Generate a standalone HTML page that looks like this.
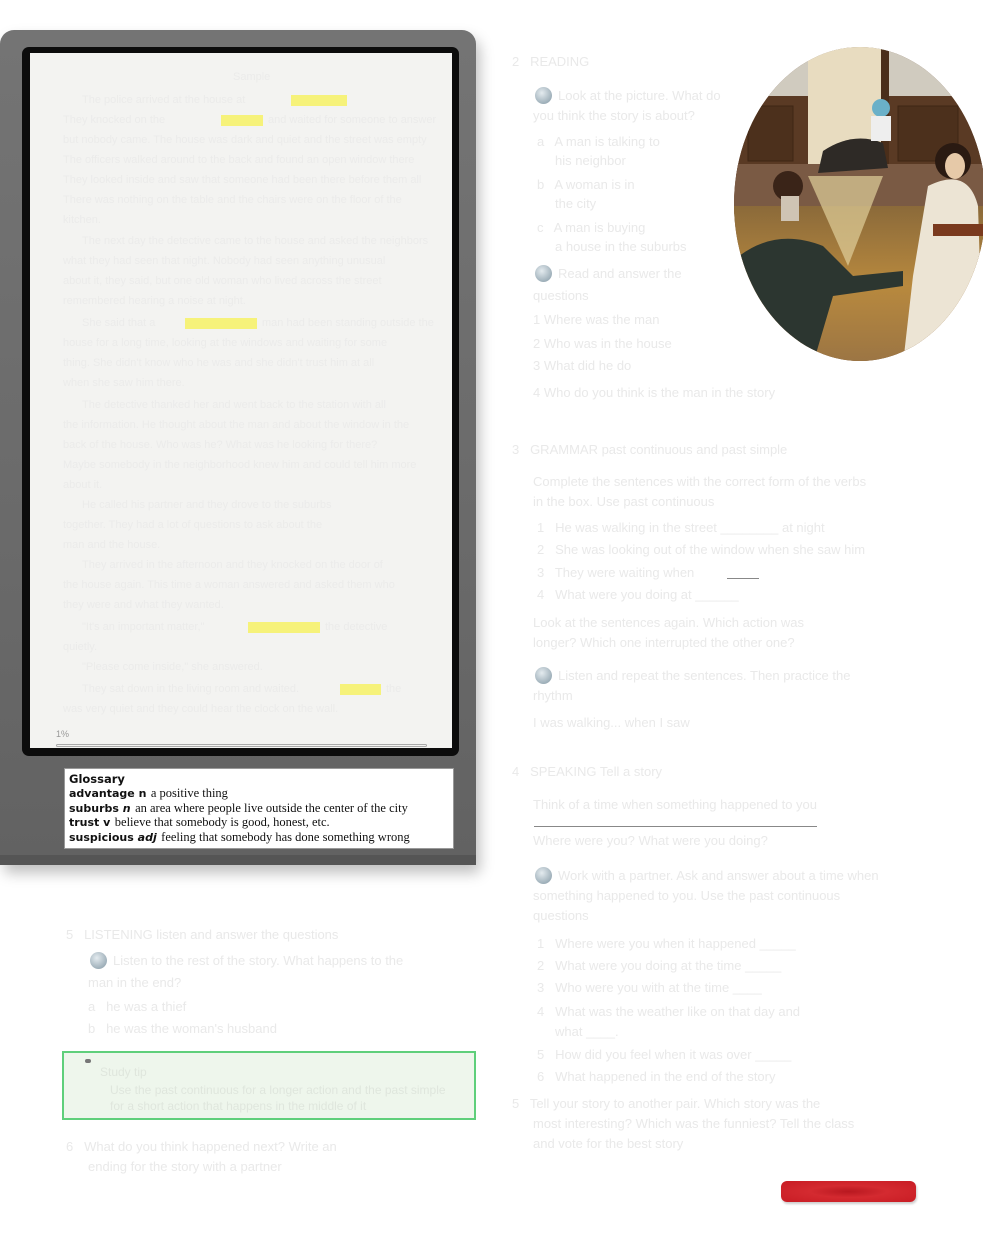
<!DOCTYPE html>
<html><head><meta charset="utf-8"><style>
*{margin:0;padding:0;box-sizing:border-box}
body{width:983px;height:1238px;background:#fff;position:relative;overflow:hidden;font-family:"Liberation Sans",sans-serif}
.t{position:absolute;color:#e9e9e9;font-size:13px;white-space:nowrap;line-height:1}
.s{position:absolute;color:#ebebea;font-size:11px;white-space:nowrap;line-height:1}
.h{position:absolute;background:#f6f27a;height:11px}
.dot{position:absolute;width:17px;height:17px;border-radius:50%;background:radial-gradient(circle at 40% 35%,#e4ebef,#9fb0ba 70%,#8c9ba5)}
.ln{position:absolute;height:1px;background:#888}
.g div{height:14.4px;line-height:14.4px;overflow:visible}
.g b{font-family:"DejaVu Sans";font-size:11px;line-height:14.4px}
.g span{font-family:"Liberation Serif";font-size:12.5px;line-height:14.4px}
</style></head><body>
<div style="position:absolute;left:0;top:30px;width:476px;height:835px;border-radius:14px 14px 4px 4px;background:linear-gradient(#747474,#6a6a6a 60%,#626262);box-shadow:4px 8px 14px rgba(0,0,0,.25)"></div>
<div style="position:absolute;left:0;top:855px;width:476px;height:10px;background:#555"></div>
<div style="position:absolute;left:22px;top:47px;width:437px;height:709px;border-radius:7px;background:#0c0c0c"></div>
<div style="position:absolute;left:30px;top:53px;width:422px;height:695px;background:#f3f3f1"></div>
<div class="h" style="left:291px;top:95px;width:56px"></div>
<div class="h" style="left:221px;top:115px;width:42px"></div>
<div class="h" style="left:185px;top:318px;width:72px"></div>
<div class="h" style="left:248px;top:622px;width:72px"></div>
<div class="h" style="left:340px;top:684px;width:41px"></div>
<div class="s" style="left:233px;top:72px">Sample</div>
<div class="s" style="left:82px;top:95px">The police arrived at the house at</div>
<div class="s" style="left:63px;top:115px">They knocked on the</div><div class="s" style="left:268px;top:115px">and waited for someone to answer</div>
<div class="s" style="left:63px;top:135px">but nobody came. The house was dark and quiet and the street was empty</div>
<div class="s" style="left:63px;top:155px">The officers walked around to the back and found an open window there</div>
<div class="s" style="left:63px;top:175px">They looked inside and saw that someone had been there before them all</div>
<div class="s" style="left:63px;top:195px">There was nothing on the table and the chairs were on the floor of the</div>
<div class="s" style="left:63px;top:215px">kitchen.</div>
<div class="s" style="left:82px;top:236px">The next day the detective came to the house and asked the neighbors</div>
<div class="s" style="left:63px;top:256px">what they had seen that night. Nobody had seen anything unusual</div>
<div class="s" style="left:63px;top:276px">about it, they said, but one old woman who lived across the street</div>
<div class="s" style="left:63px;top:296px">remembered hearing a noise at night.</div>
<div class="s" style="left:82px;top:318px">She said that a</div><div class="s" style="left:262px;top:318px">man had been standing outside the</div>
<div class="s" style="left:63px;top:338px">house for a long time, looking at the windows and waiting for some</div>
<div class="s" style="left:63px;top:358px">thing. She didn't know who he was and she didn't trust him at all</div>
<div class="s" style="left:63px;top:378px">when she saw him there.</div>
<div class="s" style="left:82px;top:400px">The detective thanked her and went back to the station with all</div>
<div class="s" style="left:63px;top:420px">the information. He thought about the man and about the window in the</div>
<div class="s" style="left:63px;top:440px">back of the house. Who was he? What was he looking for there?</div>
<div class="s" style="left:63px;top:460px">Maybe somebody in the neighborhood knew him and could tell him more</div>
<div class="s" style="left:63px;top:480px">about it.</div>
<div class="s" style="left:82px;top:500px">He called his partner and they drove to the suburbs</div>
<div class="s" style="left:63px;top:520px">together. They had a lot of questions to ask about the</div>
<div class="s" style="left:63px;top:540px">man and the house.</div>
<div class="s" style="left:82px;top:560px">They arrived in the afternoon and they knocked on the door of</div>
<div class="s" style="left:63px;top:580px">the house again. This time a woman answered and asked them who</div>
<div class="s" style="left:63px;top:600px">they were and what they wanted.</div>
<div class="s" style="left:82px;top:622px">"It's an important matter,"</div><div class="s" style="left:325px;top:622px">the detective</div>
<div class="s" style="left:63px;top:642px">quietly.</div>
<div class="s" style="left:82px;top:662px">"Please come inside," she answered.</div>
<div class="s" style="left:82px;top:684px">They sat down in the living room and waited.</div><div class="s" style="left:386px;top:684px">the</div>
<div class="s" style="left:63px;top:704px">was very quiet and they could hear the clock on the wall.</div>
<div style="position:absolute;left:56px;top:729px;font-size:9px;color:#999">1%</div>
<div style="position:absolute;left:56px;top:744px;width:371px;height:3px;border:1px solid #aaa;border-radius:2px"></div>
<div class="g" style="position:absolute;left:64px;top:768px;width:390px;height:81px;background:#fff;border:1px solid #999;padding:3px 4px;color:#111;white-space:nowrap">
<div><b style="font-size:11.5px">Glossary</b></div>
<div><b style="font-weight:600">advantage n</b> <span>a positive thing</span></div>
<div><b>suburbs <i>n</i></b> <span>an area where people live outside the center of the city</span></div>
<div><b>trust v</b> <span>believe that somebody is good, honest, etc.</span></div>
<div><b>suspicious <i>adj</i></b> <span>feeling that somebody has done something wrong</span></div>
</div>
<svg style="position:absolute;left:733px;top:46px" width="250" height="318" viewBox="0 0 250 318">
<defs><clipPath id="c"><ellipse cx="127" cy="158" rx="126" ry="157"/></clipPath>
<linearGradient id="cp" x1="0" y1="0" x2="0" y2="1"><stop offset="0" stop-color="#8b6a3a"/><stop offset=".5" stop-color="#b8893e"/><stop offset="1" stop-color="#9a7444"/></linearGradient></defs>
<g clip-path="url(#c)">
<rect width="250" height="318" fill="#6b4a32"/>
<rect width="250" height="50" fill="#d0cbbf"/>
<rect x="0" y="50" width="250" height="80" fill="#5a3a24"/>
<rect x="15" y="60" width="45" height="55" fill="#4c301c" stroke="#3e2614"/>
<rect x="165" y="60" width="60" height="55" fill="#4c301c" stroke="#3e2614"/>
<rect x="75" y="0" width="75" height="140" fill="#e8dcc0"/>
<rect x="148" y="0" width="8" height="140" fill="#4a2e1a"/>
<rect x="0" y="118" width="250" height="50" fill="#7a5a44"/>
<rect x="0" y="160" width="250" height="160" fill="url(#cp)"/>
<polygon points="75,130 150,130 115,220" fill="#e0cf9a" opacity=".7"/>
<path d="M90 105 q30 -20 60 -8 l5 25 -70 5z" fill="#2e2a26"/>
<circle cx="148" cy="62" r="9" fill="#6ab0c8"/>
<rect x="138" y="70" width="20" height="25" fill="#eee"/>
<path d="M0 215 Q40 180 90 200 L120 230 170 225 170 240 100 250 80 318 0 318z" fill="#2c3630"/>
<circle cx="55" cy="140" r="15" fill="#3a2418"/>
<rect x="48" y="150" width="18" height="25" fill="#cfc4b4"/>
<path d="M195 140 Q235 120 245 160 L250 318 170 318 180 230z" fill="#ece4d4"/>
<circle cx="220" cy="115" r="18" fill="#2a1a12"/>
<ellipse cx="222" cy="120" rx="10" ry="13" fill="#e6c9a8"/>
<rect x="200" y="178" width="55" height="12" fill="#7a3a1e"/>
</g></svg>
<div class="t" style="left:512px;top:55px">2 &nbsp; READING</div>
<div class="dot" style="left:535px;top:87px"></div>
<div class="t" style="left:558px;top:89px">Look at the picture. What do</div>
<div class="t" style="left:533px;top:109px">you think the story is about?</div>
<div class="t" style="left:537px;top:135px">a &nbsp; A man is talking to</div>
<div class="t" style="left:555px;top:154px">his neighbor</div>
<div class="t" style="left:537px;top:178px">b &nbsp; A woman is in</div>
<div class="t" style="left:555px;top:197px">the city</div>
<div class="t" style="left:537px;top:221px">c &nbsp; A man is buying</div>
<div class="t" style="left:555px;top:240px">a house in the suburbs</div>
<div class="dot" style="left:535px;top:265px"></div>
<div class="t" style="left:558px;top:267px">Read and answer the</div>
<div class="t" style="left:533px;top:289px">questions</div>
<div class="t" style="left:533px;top:313px">1 Where was the man</div>
<div class="t" style="left:533px;top:337px">2 Who was in the house</div>
<div class="t" style="left:533px;top:359px">3 What did he do</div>
<div class="t" style="left:533px;top:386px">4 Who do you think is the man in the story</div>
<div class="t" style="left:512px;top:443px">3 &nbsp; GRAMMAR past continuous and past simple</div>
<div class="t" style="left:533px;top:475px">Complete the sentences with the correct form of the verbs</div>
<div class="t" style="left:533px;top:495px">in the box. Use past continuous</div>
<div class="t" style="left:537px;top:521px">1 &nbsp; He was walking in the street ________ at night</div>
<div class="t" style="left:537px;top:543px">2 &nbsp; She was looking out of the window when she saw him</div>
<div class="t" style="left:537px;top:566px">3 &nbsp; They were waiting when</div>
<div class="t" style="left:537px;top:588px">4 &nbsp; What were you doing at ______</div>
<div class="ln" style="left:727px;top:578px;width:32px"></div>
<div class="t" style="left:533px;top:616px">Look at the sentences again. Which action was</div>
<div class="t" style="left:533px;top:636px">longer? Which one interrupted the other one?</div>
<div class="dot" style="left:535px;top:667px"></div>
<div class="t" style="left:558px;top:669px">Listen and repeat the sentences. Then practice the</div>
<div class="t" style="left:533px;top:689px">rhythm</div>
<div class="t" style="left:533px;top:716px">I was walking... when I saw</div>
<div class="t" style="left:512px;top:765px">4 &nbsp; SPEAKING Tell a story</div>
<div class="t" style="left:533px;top:798px">Think of a time when something happened to you</div>
<div class="ln" style="left:534px;top:826px;width:283px"></div>
<div class="t" style="left:533px;top:834px">Where were you? What were you doing?</div>
<div class="dot" style="left:535px;top:867px"></div>
<div class="t" style="left:558px;top:869px">Work with a partner. Ask and answer about a time when</div>
<div class="t" style="left:533px;top:889px">something happened to you. Use the past continuous</div>
<div class="t" style="left:533px;top:909px">questions</div>
<div class="t" style="left:537px;top:937px">1 &nbsp; Where were you when it happened _____</div>
<div class="t" style="left:537px;top:959px">2 &nbsp; What were you doing at the time _____</div>
<div class="t" style="left:537px;top:981px">3 &nbsp; Who were you with at the time ____</div>
<div class="t" style="left:537px;top:1005px">4 &nbsp; What was the weather like on that day and</div>
<div class="t" style="left:555px;top:1025px">what ____.</div>
<div class="t" style="left:537px;top:1048px">5 &nbsp; How did you feel when it was over _____</div>
<div class="t" style="left:537px;top:1070px">6 &nbsp; What happened in the end of the story</div>
<div class="t" style="left:512px;top:1097px">5 &nbsp; Tell your story to another pair. Which story was the</div>
<div class="t" style="left:533px;top:1117px">most interesting? Which was the funniest? Tell the class</div>
<div class="t" style="left:533px;top:1137px">and vote for the best story</div>
<div class="t" style="left:66px;top:928px">5 &nbsp; LISTENING listen and answer the questions</div>
<div class="dot" style="left:90px;top:952px"></div>
<div class="t" style="left:113px;top:954px">Listen to the rest of the story. What happens to the</div>
<div class="t" style="left:88px;top:976px">man in the end?</div>
<div class="t" style="left:88px;top:1000px">a &nbsp; he was a thief</div>
<div class="t" style="left:88px;top:1022px">b &nbsp; he was the woman's husband</div>
<div style="position:absolute;left:62px;top:1051px;width:414px;height:69px;background:#eef6ec;border:2px solid #5fcf7b"></div>
<div style="position:absolute;left:85px;top:1059px;width:6px;height:4px;background:#777;border-radius:2px"></div>
<div class="t" style="left:100px;top:1066px;color:#dfe6dd;font-size:12px">Study tip</div>
<div class="t" style="left:110px;top:1084px;color:#dfe6dd;font-size:12px">Use the past continuous for a longer action and the past simple</div>
<div class="t" style="left:110px;top:1100px;color:#dfe6dd;font-size:12px">for a short action that happens in the middle of it</div>
<div class="t" style="left:66px;top:1140px">6 &nbsp; What do you think happened next? Write an</div>
<div class="t" style="left:88px;top:1160px">ending for the story with a partner</div>
<div style="position:absolute;left:781px;top:1181px;width:135px;height:21px;border-radius:6px;background:radial-gradient(ellipse at 50% 50%,#b81820,#d42a30 40%,#c81c24);box-shadow:1px 2px 2px rgba(0,0,0,.2)"></div>
</body></html>
